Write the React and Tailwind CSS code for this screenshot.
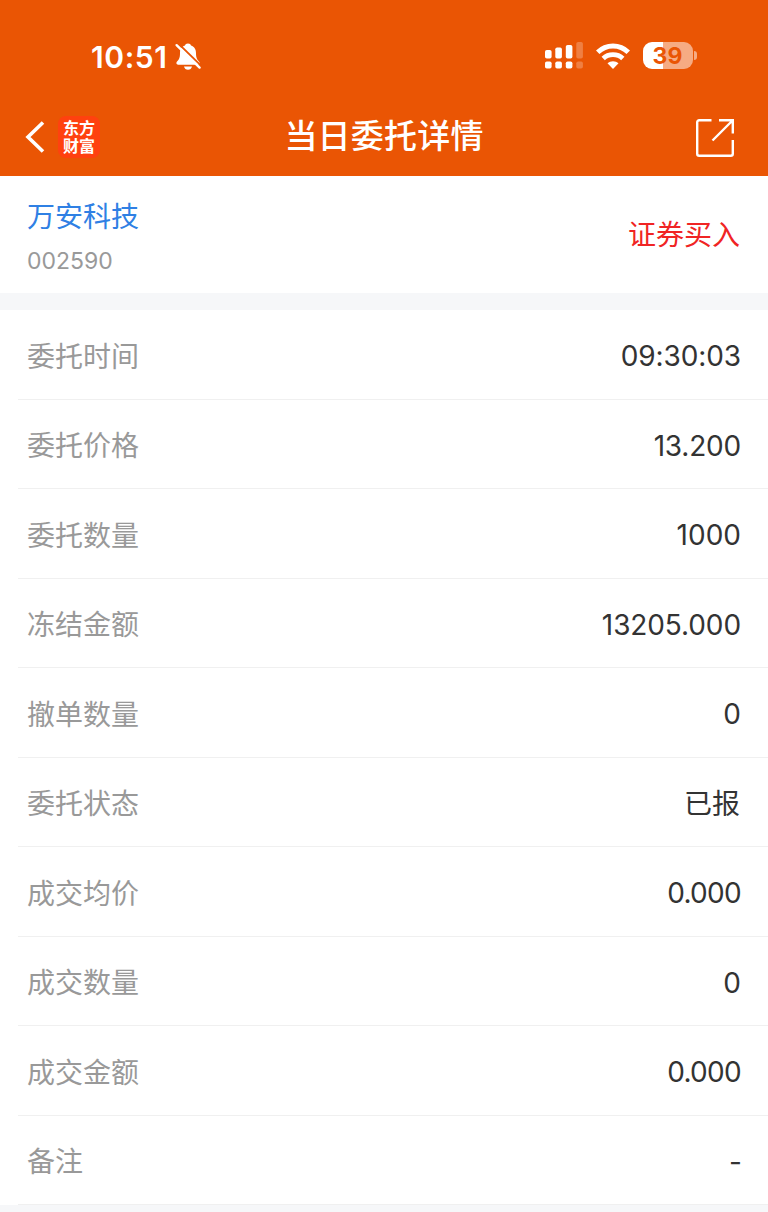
import React from 'react';

const DETALHES = [
    { label: '委托时间', valor: '09:30:03', ajuste: 'tracking-[-0.1px]' },
    { label: '委托价格', valor: '13.200', ajuste: 'tracking-[-0.2px]' },
    { label: '委托数量', valor: '1000', ajuste: 'tracking-normal' },
    { label: '冻结金额', valor: '13205.000', ajuste: 'tracking-[-0.1px]' },
    { label: '撤单数量', valor: '0', ajuste: 'tracking-normal' },
    { label: '委托状态', valor: '已报', ajuste: 'pt-px pr-px' },
    { label: '成交均价', valor: '0.000', ajuste: 'tracking-[-0.7px]' },
    { label: '成交数量', valor: '0', ajuste: 'tracking-normal' },
    { label: '成交金额', valor: '0.000', ajuste: 'tracking-[-0.7px]' },
    { label: '备注', valor: '-', ajuste: 'tracking-[-1px]' },
];

// ==========================================
// ICONS
// ==========================================
const BellOff = () => (
    <svg className="w-7 h-[30px]" viewBox="0 0 28 30" fill="none">
        <path d="M14 2.500c-1.700 0-2.700.9-3 2.100C7.400 5.800 6 8.500 6 12.300c0 4.600-1 6.200-3 8.300-1.100 1.200-.8 3.200 1.100 3.200h19.800c1.900 0 2.200-2 1.100-3.200-2-2.100-3-3.700-3-8.300 0-3.800-1.400-6.500-5-7.700-.3-1.200-1.300-2.100-3-2.100z" fill="white" />
        <path d="M10 25.500h8c-.4 2-1.900 3.300-4 3.300s-3.600-1.300-4-3.300z" fill="white" />
        <path d="M4.400 2.600L27 24.600" stroke="#ea5504" strokeWidth="2" />
        <path d="M2.600 4.200L25.600 26.600" stroke="white" strokeWidth="2.400" strokeLinecap="round" />
    </svg>
);

const Signal = () => (
    <svg className="w-[38px] h-[27px]" viewBox="0 0 38 27" fill="white">
        <rect x="0" y="8" width="6.600" height="8.500" rx="1.800" />
        <rect x="10.300" y="5.500" width="6.600" height="11" rx="1.800" />
        <rect x="20.800" y="3" width="6.600" height="13.500" rx="1.800" />
        <rect x="31.300" y="0" width="6.600" height="16.500" rx="1.800" opacity="0.25" />
        <rect x="0" y="19.500" width="6.600" height="7" rx="1.800" />
        <rect x="10.300" y="19.500" width="6.600" height="7" rx="1.800" />
        <rect x="20.800" y="19.500" width="6.600" height="7" rx="1.800" />
        <rect x="31.300" y="19.500" width="6.600" height="7" rx="1.800" opacity="0.25" />
    </svg>
);

const Wifi = () => (
    <svg className="w-[34px] h-[26px]" viewBox="0 0 34 26" fill="none">
        <path d="M1.700 9.300C10.200.9 23.800.9 32.300 9.300" stroke="white" strokeWidth="5" />
        <path d="M7.200 15.400c5.300-5.100 14.300-5.100 19.600 0" stroke="white" strokeWidth="4.800" />
        <path d="M17 26l-5.500-5.700c2.900-2.800 8.100-2.800 11 0z" fill="white" />
    </svg>
);

const Battery = () => (
    <div className="flex items-center gap-[1.5px]">
        <div className="w-[50px] h-[27px] pt-px rounded-[9px] flex items-center justify-center bg-linear-to-r from-white from-40% to-[#f6ab83] to-40%">
            <span className="text-[23px] leading-[27px] font-bold text-[#ea5504]">39</span>
        </div>
        <div className="w-[3px] h-[9px] rounded-r-full bg-[#f6ab83]"></div>
    </div>
);

const Share = () => (
    <svg className="w-10 h-10" viewBox="0 0 40 40" fill="none" stroke="white" strokeWidth="2.400">
        <path d="M16.500 2.200H4.200a2 2 0 0 0-2 2v31.600a2 2 0 0 0 2 2h31.600a2 2 0 0 0 2-2V22" />
        <path d="M24 2.200h13.800V15.500M17.500 22.500L37.500 2.500" />
    </svg>
);

// ==========================================
// CABEÇALHO
// ==========================================
const Header = () => (
    <header className="h-[176px] bg-[#ea5504] text-white flex flex-col">
        <div className="h-[97px] pt-3.5 pl-[91px] pr-[71px] flex items-center justify-between">
            <div className="flex items-center gap-[5px]">
                <span className="w-[78px] pt-0.5 text-[30px] leading-none font-semibold tracking-[0.6px]">10:51</span>
                <BellOff />
            </div>
            <div className="flex items-center">
                <Signal />
                <div className="ml-[13px] mr-[12.5px]"><Wifi /></div>
                <Battery />
            </div>
        </div>
        <div className="flex-1 pt-px grid grid-cols-3 items-center pl-[25px] pr-[33px]">
            <div className="flex items-center gap-[13px]">
                <svg className="w-5 h-8" viewBox="0 0 20 32" fill="none" stroke="white" strokeWidth="3.600">
                    <path d="M18 1.500L3 16l15 14.500" />
                </svg>
                <div className="w-[42px] h-[42px] rounded-lg bg-[#ff410f] flex items-center justify-center text-base leading-[18px] font-bold">
                    <span>东方<br />财富</span>
                </div>
            </div>
            <h1 className="pl-2 pb-0.5 text-[33px] leading-10 tracking-[0.2px] font-medium text-center whitespace-nowrap">当日委托详情</h1>
            <div className="pt-px flex justify-end"><Share /></div>
        </div>
    </header>
);

const Linha = ({ label, valor, ajuste }) => (
    <div className="ml-[18px] h-[89.5px] pt-1 pl-[9px] pr-[27px] flex items-center justify-between border-b border-[#f0f0f0]">
        <span className="pt-px text-[#999999]">{label}</span>
        <span className={`text-[#333333] ${ajuste}`}>{valor}</span>
    </div>
);

const App = () => {
    return (
        <div className="w-full h-[1212px] overflow-hidden bg-[#f6f7f9] text-[28px] leading-10 font-['Inter','Noto_Sans_CJK_SC',sans-serif]">
            <Header />

            <section className="h-[117px] px-[27px] bg-white flex items-center justify-between">
                <div className="pt-1.5 flex flex-col">
                    <span className="text-[#2f80e4]">万安科技</span>
                    <span className="mt-2 text-[23px] leading-[33px] text-[#999999]">002590</span>
                </div>
                <span className="pr-px text-[#f02424]">证券买入</span>
            </section>

            <section className="mt-[17px] bg-white">
                {DETALHES.map(d => <Linha key={d.label} label={d.label} valor={d.valor} ajuste={d.ajuste} />)}
            </section>
        </div>
    );
};

export default App;
